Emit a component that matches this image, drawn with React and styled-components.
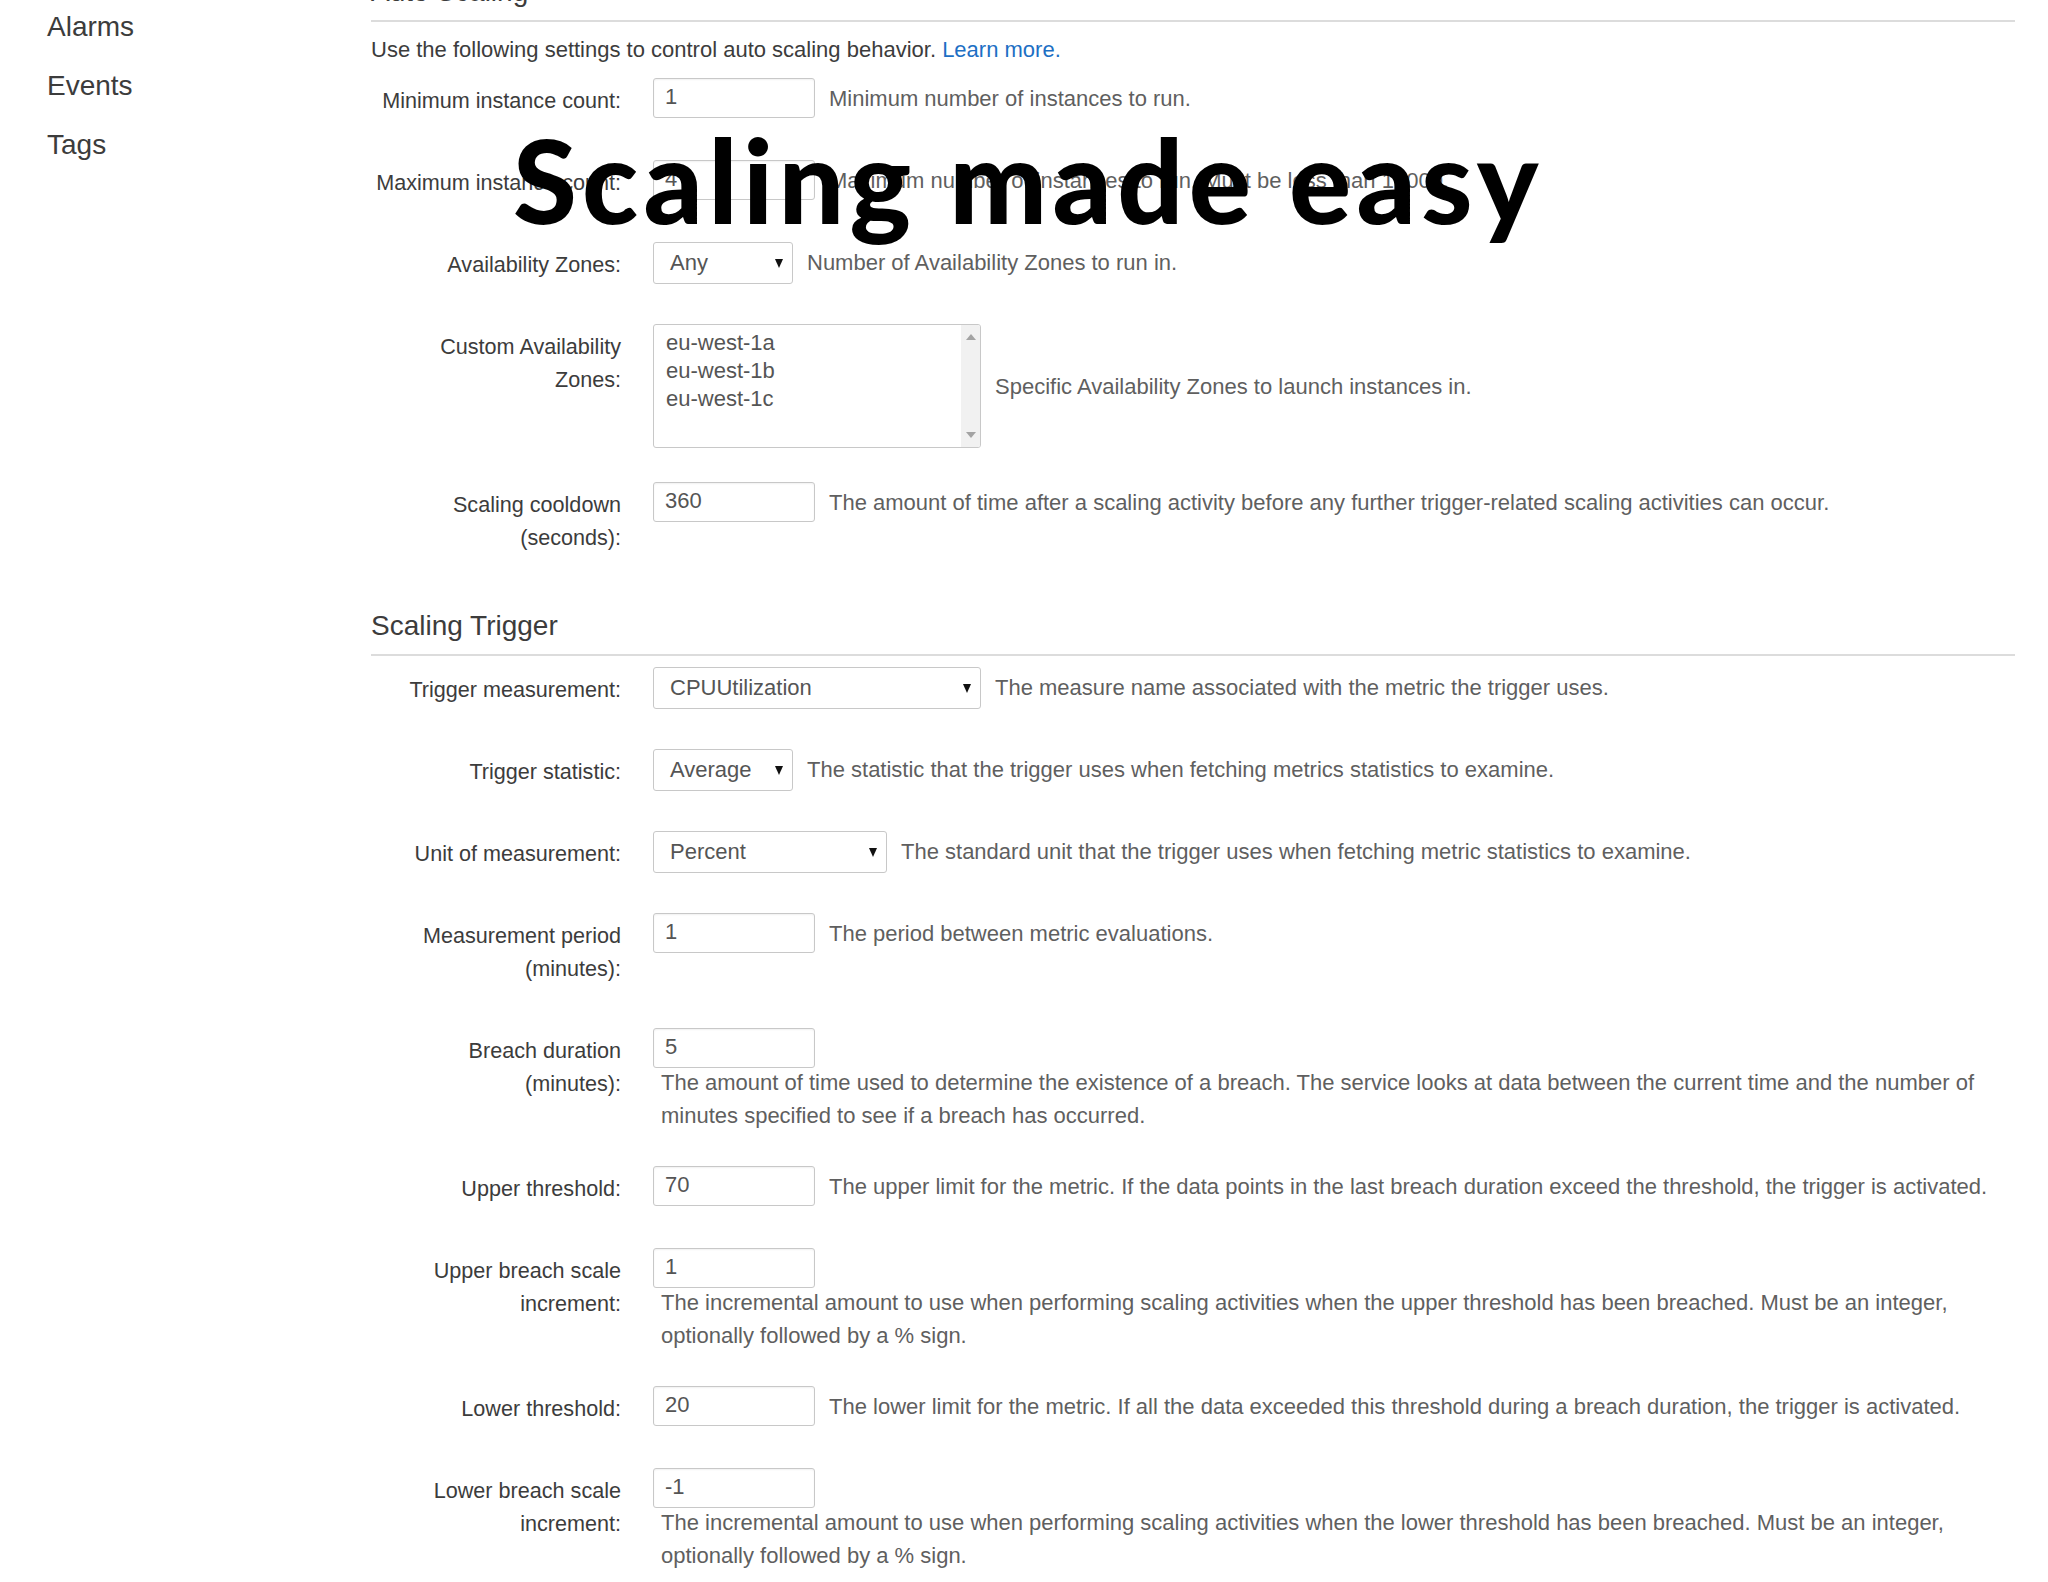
import React from "react";
import styled, { createGlobalStyle } from "styled-components";

const Global = createGlobalStyle`
  html, body { margin: 0; padding: 0; background: #ffffff; }
  body { font-family: "Liberation Sans", Arial, sans-serif; color: #3c3c3c; overflow: hidden; }
  #root { position: relative; min-height: 1582px; }
`;

const Page = styled.div`
  display: grid;
  grid-template-columns: 371px 1fr;
  padding-right: 33px;
`;

const Sidebar = styled.nav`
  display: flex;
  flex-direction: column;
  padding-left: 47px;
  margin-top: -3px;
`;

const NavItem = styled.div`
  font-size: 28px;
  line-height: 59px;
  color: #3c3c3c;
`;

const Main = styled.main`
  display: flex;
  flex-direction: column;
`;

const SectionTitle = styled.h2`
  margin: ${(p) => (p.$first ? "-25px 0 0" : "12px 0 0")};
  font-size: 28px;
  font-weight: normal;
  line-height: 34px;
  color: #3c3c3c;
  padding-bottom: 11px;
  border-bottom: 2px solid #dcdcdc;
  margin-bottom: 11px;
`;

const Intro = styled.p`
  margin: 0 0 12px;
  font-size: 22px;
  line-height: 33px;
  color: #3c3c3c;
`;

const Link = styled.a`
  color: #1d6fc4;
  text-decoration: none;
`;

const Row = styled.div`
  display: grid;
  grid-template-columns: 250px 1fr;
  column-gap: 32px;
  margin-bottom: 34px;
`;

const Label = styled.div`
  text-align: right;
  white-space: nowrap;
  font-size: 21.6px;
  line-height: 33px;
  padding: 6px 0 9px;
  color: #3c3c3c;
`;

const Field = styled.div`
  display: flex;
  flex-wrap: wrap;
  align-items: flex-start;
`;

const TextInput = styled.div`
  box-sizing: border-box;
  width: 162px;
  height: 40px;
  border: 1px solid #c8c8c8;
  border-radius: 3px;
  box-shadow: inset 0 1px 2px rgba(0, 0, 0, 0.06);
  padding: 0 11px;
  font-size: 22px;
  line-height: 36px;
  color: #555;
  background: #fff;
`;

const SelectBox = styled.div`
  box-sizing: border-box;
  position: relative;
  width: ${(p) => p.$w}px;
  height: 42px;
  border: 1px solid #c8c8c8;
  border-radius: 3px;
  padding: 0 30px 0 16px;
  font-size: 22px;
  line-height: 40px;
  color: #555;
  background: #fff;
  &::after {
    content: "";
    position: absolute;
    right: 9px;
    top: 16px;
    border-left: 4px solid transparent;
    border-right: 4px solid transparent;
    border-top: 9px solid #111;
  }
`;

const ListBox = styled.div`
  box-sizing: border-box;
  width: 328px;
  height: 124px;
  border: 1px solid #c8c8c8;
  border-radius: 3px;
  display: grid;
  grid-template-columns: 1fr 19px;
  background: #fff;
  overflow: hidden;
`;

const ListItems = styled.div`
  display: flex;
  flex-direction: column;
  padding: 4px 12px;
  font-size: 22px;
  line-height: 28px;
  color: #555;
`;

const ScrollTrack = styled.div`
  background: #f1f1f1;
  display: flex;
  flex-direction: column;
  justify-content: space-between;
  align-items: center;
  padding: 9px 0;
`;

const Arrow = styled.span`
  width: 0;
  height: 0;
  border-left: 5px solid transparent;
  border-right: 5px solid transparent;
  ${(p) =>
    p.$up ? "border-bottom: 6px solid #a3a3a3;" : "border-top: 6px solid #a3a3a3;"}
`;

const Help = styled.div`
  font-size: 22px;
  line-height: 33px;
  color: #5f5f5f;
  margin-left: 14px;
  padding-top: 4px;
  ${(p) => p.$center && "align-self: center; padding-top: 0;"}
  ${(p) =>
    p.$below &&
    "flex-basis: 100%; margin-left: 8px; padding-top: 0; margin-top: -2px; padding-right: 20px;"}
`;

const Overlay = styled.div`
  position: absolute;
  left: 513px;
  top: 122px;
  font-family: Lato, "Noto Sans", sans-serif;
  font-weight: 900;
  font-size: 116px;
  line-height: 1;
  letter-spacing: 5.3px;
  color: #000;
  white-space: nowrap;
`;

const FormRow = ({ label, children }) => (
  <Row>
    <Label>{label}</Label>
    <Field>{children}</Field>
  </Row>
);

export default function App() {
  return (
    <>
      <Global />
      <Page>
        <Sidebar>
          <NavItem>Alarms</NavItem>
          <NavItem>Events</NavItem>
          <NavItem>Tags</NavItem>
        </Sidebar>
        <Main>
          <SectionTitle $first>Auto Scaling</SectionTitle>
          <Intro>
            Use the following settings to control auto scaling behavior.{" "}
            <Link href="#">Learn more.</Link>
          </Intro>

          <FormRow label="Minimum instance count:">
            <TextInput>1</TextInput>
            <Help>Minimum number of instances to run.</Help>
          </FormRow>

          <FormRow label="Maximum instance count:">
            <TextInput>4</TextInput>
            <Help>Maximum number of instances to run. Must be less than 10000.</Help>
          </FormRow>

          <FormRow label="Availability Zones:">
            <SelectBox $w={140}>Any</SelectBox>
            <Help>Number of Availability Zones to run in.</Help>
          </FormRow>

          <FormRow
            label={
              <>
                Custom Availability
                <br />
                Zones:
              </>
            }
          >
            <ListBox>
              <ListItems>
                <span>eu-west-1a</span>
                <span>eu-west-1b</span>
                <span>eu-west-1c</span>
              </ListItems>
              <ScrollTrack>
                <Arrow $up />
                <Arrow />
              </ScrollTrack>
            </ListBox>
            <Help $center>Specific Availability Zones to launch instances in.</Help>
          </FormRow>

          <FormRow
            label={
              <>
                Scaling cooldown
                <br />
                (seconds):
              </>
            }
          >
            <TextInput>360</TextInput>
            <Help>
              The amount of time after a scaling activity before any further trigger-related
              scaling activities can occur.
            </Help>
          </FormRow>

          <SectionTitle>Scaling Trigger</SectionTitle>

          <FormRow label="Trigger measurement:">
            <SelectBox $w={328}>CPUUtilization</SelectBox>
            <Help>The measure name associated with the metric the trigger uses.</Help>
          </FormRow>

          <FormRow label="Trigger statistic:">
            <SelectBox $w={140}>Average</SelectBox>
            <Help>
              The statistic that the trigger uses when fetching metrics statistics to examine.
            </Help>
          </FormRow>

          <FormRow label="Unit of measurement:">
            <SelectBox $w={234}>Percent</SelectBox>
            <Help>
              The standard unit that the trigger uses when fetching metric statistics to examine.
            </Help>
          </FormRow>

          <FormRow
            label={
              <>
                Measurement period
                <br />
                (minutes):
              </>
            }
          >
            <TextInput>1</TextInput>
            <Help>The period between metric evaluations.</Help>
          </FormRow>

          <FormRow
            label={
              <>
                Breach duration
                <br />
                (minutes):
              </>
            }
          >
            <TextInput>5</TextInput>
            <Help $below>
              The amount of time used to determine the existence of a breach. The service looks at
              data between the current time and the number of minutes specified to see if a breach
              has occurred.
            </Help>
          </FormRow>

          <FormRow label="Upper threshold:">
            <TextInput>70</TextInput>
            <Help>
              The upper limit for the metric. If the data points in the last breach duration
              exceed the threshold, the trigger is activated.
            </Help>
          </FormRow>

          <FormRow
            label={
              <>
                Upper breach scale
                <br />
                increment:
              </>
            }
          >
            <TextInput>1</TextInput>
            <Help $below>
              The incremental amount to use when performing scaling activities when the upper
              threshold has been breached. Must be an integer, optionally followed by a % sign.
            </Help>
          </FormRow>

          <FormRow label="Lower threshold:">
            <TextInput>20</TextInput>
            <Help>
              The lower limit for the metric. If all the data exceeded this threshold during a
              breach duration, the trigger is activated.
            </Help>
          </FormRow>

          <FormRow
            label={
              <>
                Lower breach scale
                <br />
                increment:
              </>
            }
          >
            <TextInput>-1</TextInput>
            <Help $below>
              The incremental amount to use when performing scaling activities when the lower
              threshold has been breached. Must be an integer, optionally followed by a % sign.
            </Help>
          </FormRow>
        </Main>
      </Page>
      <Overlay>Scaling made easy</Overlay>
    </>
  );
}
